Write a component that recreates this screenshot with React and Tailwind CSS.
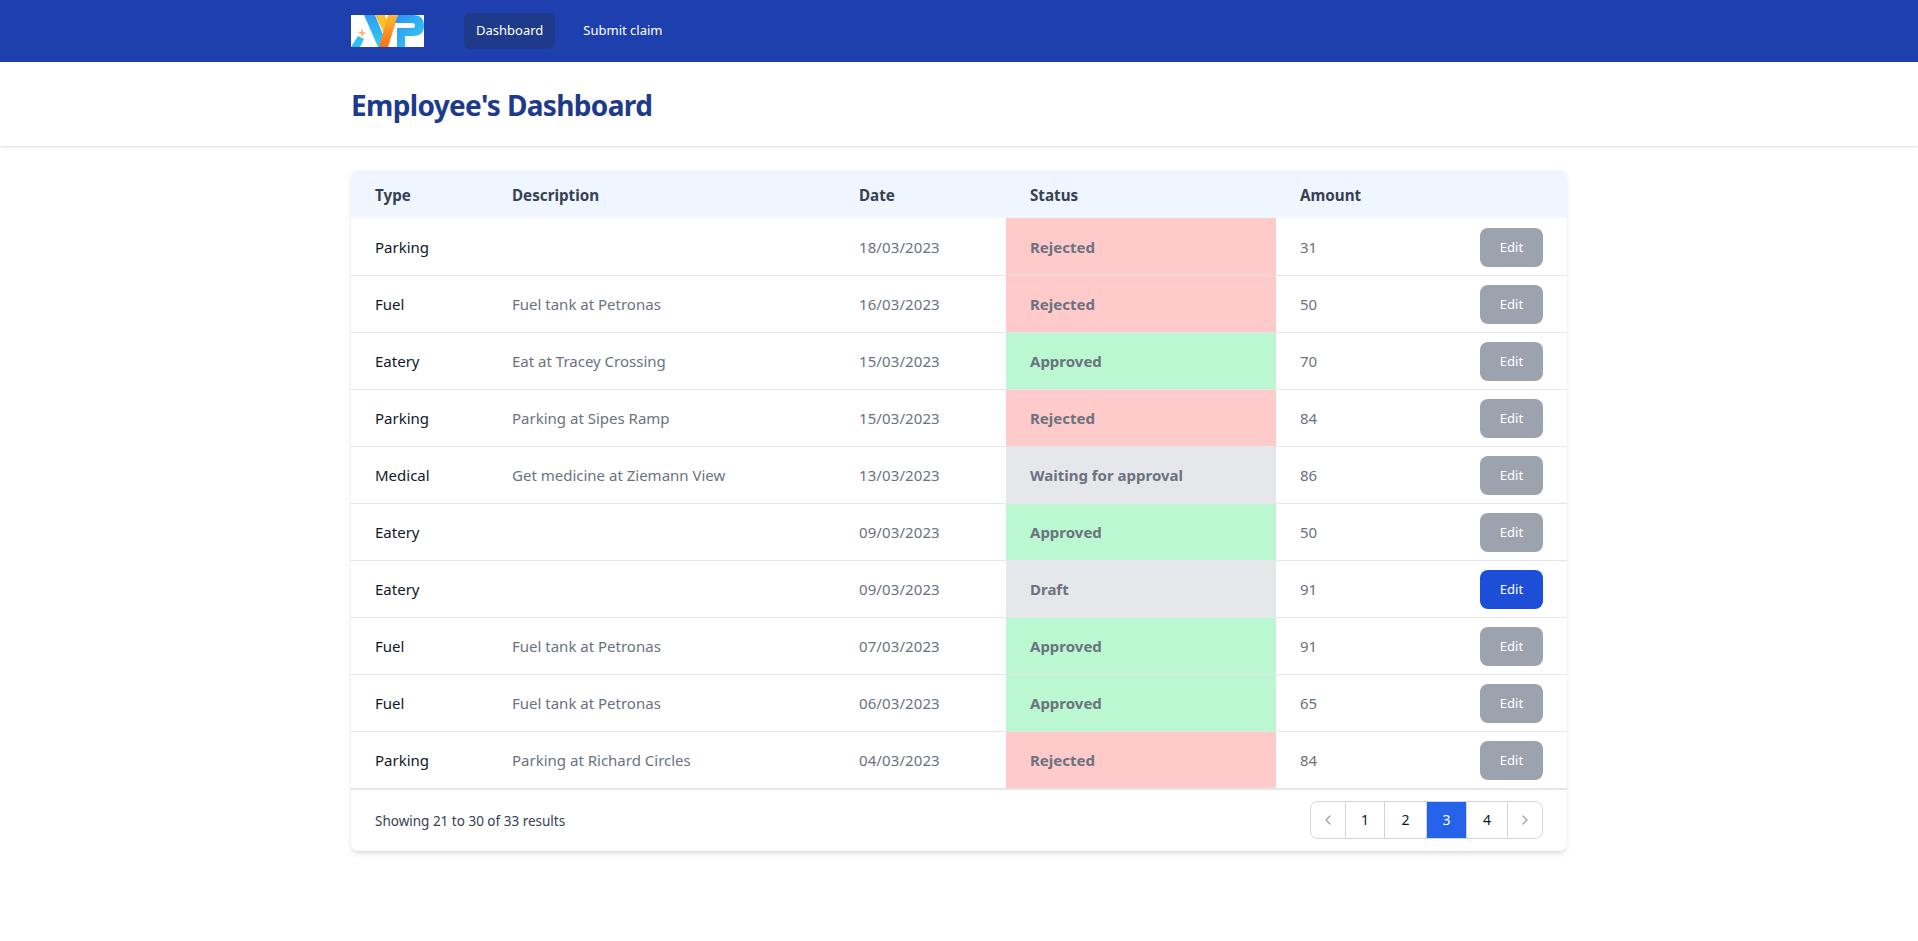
import React from "react";
import { ChevronLeft, ChevronRight } from "lucide-react";
const rows=[["Parking","","18/03/2023","Rejected",31],["Fuel","Fuel tank at Petronas","16/03/2023","Rejected",50],["Eatery","Eat at Tracey Crossing","15/03/2023","Approved",70],["Parking","Parking at Sipes Ramp","15/03/2023","Rejected",84],["Medical","Get medicine at Ziemann View","13/03/2023","Waiting for approval",86],["Eatery","","09/03/2023","Approved",50],["Eatery","","09/03/2023","Draft",91],["Fuel","Fuel tank at Petronas","07/03/2023","Approved",91],["Fuel","Fuel tank at Petronas","06/03/2023","Approved",65],["Parking","Parking at Richard Circles","04/03/2023","Rejected",84]];
const st={Rejected:"bg-[#fecaca]",Approved:"bg-[#bbf7d0]",Draft:"bg-[#e5e7eb]","Waiting for approval":"bg-[#e5e7eb]"};
const pages=[
  {k:"prev",w:"w-[36px]",c:"rounded-l-lg text-[#9ca3af]",i:<ChevronLeft size={16}/>},
  {k:"1",w:"w-[40px]",c:"text-[#111827]"},
  {k:"2",w:"w-[43px]",c:"text-[#111827]"},
  {k:"3",w:"w-[41px]",c:"bg-[#2563eb] text-white border-[#2563eb]"},
  {k:"4",w:"w-[42px]",c:"text-[#111827]"},
  {k:"next",w:"w-[36px]",c:"rounded-r-lg text-[#9ca3af]",i:<ChevronRight size={16}/>},
];
function Logo(){return <svg width="73" height="32" viewBox="0 0 73 32">
  <defs>
    <linearGradient id="a" x1="0" y1="0" x2="0" y2="1"><stop offset="0" stopColor="#2f9bf5"/><stop offset="1" stopColor="#2fd0ee"/></linearGradient>
    <linearGradient id="y" x1="0" y1="0" x2="0" y2="1"><stop offset="0" stopColor="#fdb92e"/><stop offset="1" stopColor="#f9701c"/></linearGradient>
    <linearGradient id="p" x1="0" y1="0" x2="1" y2="1"><stop offset="0" stopColor="#2f8df5"/><stop offset="1" stopColor="#35d3ea"/></linearGradient>
  </defs>
  <rect width="73" height="32" fill="#fff"/>
  <path d="M13 0H24L37 32H27Z" fill="url(#a)"/>
  <path d="M0 32L7 21L13 24L9 32Z" fill="#2fc0ee"/>
  <path d="M11 13L12 17L16 18L12 19L11 23L10 19L6 18L10 17Z" fill="#fbb36a"/>
  <path d="M24 0H34L40 16L34 20Z" fill="#fdc02f"/>
  <path d="M47 0H37L28 32H37Z" fill="url(#y)"/>
  <path d="M47 0H62Q73 0 73 11Q73 21 62 21H54V32H46V13H61Q64 13 64 10.5Q64 8 61 8H44Z" fill="url(#p)"/>
</svg>}
export default function App(){return <div className="min-h-screen bg-white font-['Noto_Sans',sans-serif]">
<nav className="bg-[#1e40af] h-[62px]"><div className="w-[1216px] mx-auto flex items-center h-full">
<Logo/>
<div className="ml-10 flex gap-4"><a className="px-3 h-9 flex items-center rounded-md bg-[#1e3a8a] text-white text-[13px]">Dashboard</a><a className="px-3 h-9 flex items-center rounded-md text-white text-[13px]">Submit claim</a></div></div></nav>
<header className="bg-white shadow h-[84px]"><div className="w-[1216px] mx-auto h-full flex items-center pt-0.5"><h1 className="text-[28px] font-bold tracking-[-0.65px] text-[#1e3a8a]">Employee's Dashboard</h1></div></header>
<main className="w-[1216px] mx-auto mt-6 rounded-lg shadow-md bg-white overflow-hidden">
<table className="w-full text-left text-[15px]"><thead className="bg-[#eff6ff] text-[#374151] text-[15.2px]"><tr className="h-12 font-bold">
<th className="pl-6 pt-0.5 w-[137px]">Type</th><th className="pl-6 pt-0.5 w-[347px]">Description</th><th className="pl-6 pt-0.5 w-[171px]">Date</th><th className="pl-6 pt-0.5 w-[270px]">Status</th><th className="pl-6 pt-0.5">Amount</th><th/></tr></thead>
<tbody>{rows.map((r,i)=><tr key={i} className="h-[57px] border-b border-[#e5e7eb]">
<td className="pl-6 pt-0.5 text-[#111827]">{r[0]}</td><td className="pl-6 pt-0.5 text-[#6b7280]">{r[1]}</td><td className="pl-6 pt-0.5 text-[#6b7280] tracking-[0.1px]">{r[2]}</td>
<td className={"pl-6 pt-0.5 font-bold text-[#6b7280] "+st[r[3]]}>{r[3]}</td><td className="pl-6 pt-0.5 text-[#6b7280]">{r[4]}</td>
<td className="pr-6 pt-0.5 text-right"><button className={"w-[63px] h-[39px] rounded-lg text-[13px] text-white "+(r[3]==="Draft"?"bg-[#1d4ed8]":"bg-[#9ca3af]")}>Edit</button></td></tr>)}</tbody></table>
<div className="h-[62px] border-t border-[#e5e7eb] flex items-center justify-between px-6 text-[13.5px] text-[#374151]"><span className="pt-0.5">Showing 21 to 30 of 33 results</span>
<nav className="flex h-[38px] text-sm">{pages.map((p,i)=><span key={p.k} className={"flex items-center justify-center border border-[#d1d5db] "+(i>0?"-ml-px ":"")+p.w+" "+p.c}>{p.i||p.k}</span>)}</nav></div>
</main></div>}
